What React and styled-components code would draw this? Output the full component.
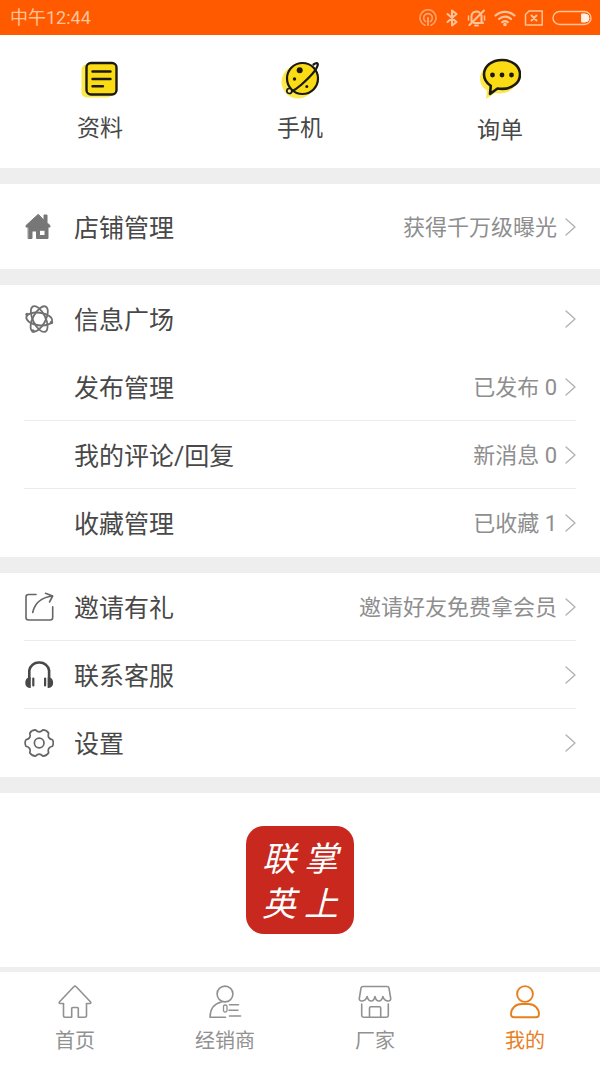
import React from 'react';
import styled, { createGlobalStyle } from 'styled-components';

const GlobalStyle = createGlobalStyle`
    * {
        box-sizing: border-box;
    }

    body {
        margin: 0;
        background: #eeeeee;
        color: #484848;
        font-family: Roboto, 'Noto Sans CJK SC', sans-serif;
    }

    a {
        color: inherit;
        text-decoration: none;
    }

    svg {
        display: block;
        flex: none;
    }
`;

const Page = styled.div`
    display: flex;
    flex-direction: column;
    min-height: 100vh;
`;

const StatusBar = styled.header`
    display: flex;
    align-items: center;
    justify-content: space-between;
    height: 35px;
    padding: 0 8px 0 10px;
    background: #ff5a00;
    color: #ffc39a;
    font-size: 18px;
    line-height: 24px;
`;

const StatusIcons = styled.div`
    display: flex;
    align-items: center;
    gap: 8px;
`;

const Main = styled.main`
    display: flex;
    flex: 1;
    flex-direction: column;
    gap: 16px;
`;

const Shortcuts = styled.nav`
    display: grid;
    grid-template-columns: repeat(3, 1fr);
    padding: 23px 0;
    background: #ffffff;
`;

const Shortcut = styled.a`
    display: flex;
    flex-direction: column;
    align-items: center;
    gap: 15px;
    font-size: 23px;
    line-height: 28px;
`;

const Card = styled.section`
    padding: 0 24px;
    background: #ffffff;
`;

const Row = styled.a`
    display: flex;
    align-items: center;
    height: ${({ $tall }) => ($tall ? 85 : 68)}px;
    border-bottom: ${({ $line }) => ($line ? '1px solid #ececec' : 'none')};
`;

const RowIcon = styled.span`
    width: 30px;
    margin-right: 20px;
    color: #666666;
`;

const RowLabel = styled.span`
    flex: 1;
    padding-top: 4px;
    font-size: 25px;
    line-height: 32px;
`;

const RowNote = styled.span`
    margin-right: 8px;
    padding-top: 2px;
    color: #8e8e8e;
    font-size: 22px;
    line-height: 28px;
`;

const LogoPanel = styled.section`
    display: flex;
    flex: 1;
    align-items: center;
    justify-content: center;
    padding: 33px 0;
    background: #ffffff;
`;

const Logo = styled.div`
    display: grid;
    grid-template-columns: 1fr 1fr;
    align-items: center;
    justify-items: center;
    width: 108px;
    height: 108px;
    padding: 10px 12px 8px;
    border-radius: 18px;
    background: #c8281e;
    color: #ffffff;
    font-size: 34px;
    font-style: italic;
    line-height: 44px;
`;

const TabBar = styled.nav`
    display: grid;
    grid-template-columns: repeat(4, 1fr);
    margin-top: 5px;
    padding: 13px 0;
    background: #ffffff;
`;

const Tab = styled.a`
    display: flex;
    flex-direction: column;
    align-items: center;
    gap: 10px;
    color: ${({ $active }) => ($active ? '#e6801f' : '#919191')};
    font-size: 20px;
    line-height: 24px;
`;

const Line = ({ width, height, stroke = 1.6, children }) => (
    <svg
        width={width}
        height={height}
        viewBox={`0 0 ${width} ${height}`}
        fill="none"
        stroke="currentColor"
        strokeWidth={stroke}
        strokeLinecap="round"
        strokeLinejoin="round"
        aria-hidden="true"
    >
        {children}
    </svg>
);

const HotspotIcon = () => (
    <Line width={18} height={18} stroke={1.6}>
        <g opacity="0.7">
            <path d="M6 16.2a8 8 0 1 1 6 0" />
            <path d="M6.6 12.5a4.3 4.3 0 1 1 4.8 0" />
            <path d="M9 9v7" strokeWidth="2" />
        </g>
    </Line>
);

const BluetoothIcon = () => (
    <Line width={14} height={18} stroke={2}>
        <path d="M2.5 5l9 8L7 16.500V1.500L11.500 5l-9 8" />
    </Line>
);

const MutedBellIcon = () => (
    <Line width={19} height={18} stroke={2}>
        <path d="M4.500 12.500V7a5 5 0 0 1 8-3.500M14.500 6.500v6l1.500 1.500H7M8 16.500h3M17 1.500L2.500 16" />
        <path d="M1.500 7v4M17.500 7v4" strokeWidth="1.500" />
    </Line>
);

const WifiIcon = () => (
    <Line width={22} height={18} stroke={2.2}>
        <path d="M1.500 6.500a14 14 0 0 1 19 0M5 10a9 9 0 0 1 12 0M8.300 13.200a4.500 4.500 0 0 1 5.400 0" />
        <circle cx="11" cy="15.500" r="0.700" fill="currentColor" />
    </Line>
);

const SimIcon = () => (
    <Line width={20} height={18} stroke={1.5}>
        <path d="M5 2h13.200v14H1.500V5.500z" />
        <path d="M7.500 6.500l5 5M12.500 6.500l-5 5" strokeWidth="2" />
    </Line>
);

const BatteryIcon = () => (
    <Line width={40} height={16} stroke={1.4}>
        <rect x="1" y="1.500" width="38" height="13" rx="6.500" />
        <path d="M30 4h3a4 4 0 0 1 0 8h-3z" fill="#fff0e4" stroke="#fff0e4" strokeWidth="1" />
    </Line>
);

const ProfileIcon = () => (
    <Line width={40} height={42} stroke={2.4}>
        <rect x="1.500" y="6.500" width="31" height="33" rx="5" fill="#fbe94e" stroke="none" />
        <rect x="6.500" y="5" width="30" height="31.500" rx="4.500" fill="#fadb14" stroke="#1c1a10" />
        <path d="M12.500 13.500h18M12.500 21h18M12.500 28.300h10.500" stroke="#1c1a10" />
    </Line>
);

const PlanetIcon = () => (
    <Line width={40} height={42} stroke={2.2}>
        <circle cx="18" cy="24" r="16.500" fill="#fbe94e" stroke="none" />
        <circle cx="22.500" cy="20.500" r="15.500" fill="#fadb14" stroke="#1c1a10" />
        <path
            d="M33.500 6.500c2.500-1.800 4.600-1.800 4.300.3C37 11 29 20 21 27c-3.200 2.800-6.500 5-9.500 6.500"
            stroke="#1c1a10"
        />
        <circle cx="9.300" cy="33" r="2.500" fill="#fff2a0" stroke="#1c1a10" strokeWidth="1.700" />
        <circle cx="19.700" cy="12.200" r="3" fill="#1c1a10" stroke="none" />
        <circle cx="14.500" cy="21" r="1.700" fill="#1c1a10" stroke="none" />
        <circle cx="26.800" cy="28.500" r="1.500" fill="#1c1a10" stroke="none" />
    </Line>
);

const InquiryIcon = () => (
    <Line width={42} height={44} stroke={2.6}>
        <path
            d="M19 6C9 6 1 12 1 21c0 5 3 9 7 11.500L7 41l9-6c12 2 21-4 21-13S29 6 19 6z"
            fill="#fbe94e"
            stroke="none"
        />
        <path
            d="M23 2C13 2 5 8 5 16.500c0 4.800 2.500 8.500 6.800 11.300L11 36l7.500-5.500c1.500.3 3 .4 4.500.4 10 0 18-6 18-14.400S33 2 23 2z"
            fill="#fadb14"
            stroke="#1c1a10"
        />
        <g fill="#1c1a10" stroke="none">
            <circle cx="13.500" cy="17" r="2.400" />
            <circle cx="23" cy="17" r="2.400" />
            <circle cx="32.500" cy="17" r="2.400" />
        </g>
    </Line>
);

const StoreIcon = () => (
    <Line width={30} height={30} stroke={1}>
        <g fill="#777777" stroke="#777777">
            <path d="M14 2.500L2 13.500v1.500h24v-1.500l-3-2.800V3h-3v5z" />
            <path
                d="M4.500 15h19.500v11.500H12.500V19H8v7.500H4.500zM15.500 18.500v5h5.500v-5z"
                fillRule="evenodd"
            />
        </g>
    </Line>
);

const AtomIcon = () => (
    <Line width={30} height={30} stroke={1.8}>
        <g stroke="#707070">
            <ellipse cx="15.200" cy="15" rx="13" ry="6.300" transform="rotate(8 15.200 15)" />
            <ellipse cx="15.200" cy="15" rx="14" ry="6.300" transform="rotate(64 15.200 15)" />
            <ellipse cx="15.200" cy="15" rx="14" ry="6.300" transform="rotate(118 15.200 15)" />
        </g>
        <g fill="#707070" stroke="none">
            <circle cx="3" cy="10.500" r="1.700" />
            <circle cx="27.500" cy="18.500" r="1.700" />
            <circle cx="9" cy="27" r="1.700" />
        </g>
    </Line>
);

const ShareIcon = () => (
    <Line width={30} height={30}>
        <path d="M12 2.500H4.500a2.500 2.500 0 0 0-2.500 2.500v20.500A2.500 2.500 0 0 0 4.500 28h21.700a2.500 2.500 0 0 0 2.500-2.500V14.700" />
        <path d="M8.700 20.500C10.500 12 17 5.500 28.300 4M21.500 1.300L28.700 4l-3.200 6" />
    </Line>
);

const HeadphonesIcon = () => (
    <Line width={30} height={30} stroke={2.6}>
        <g stroke="#484848">
            <path d="M5.300 18v-7.500A9.500 9 0 0 1 15.200 2.500a9.500 9 0 0 1 9.900 8V18" />
            <path d="M9.300 18.500v7M21.100 18.500v7" strokeWidth="2.200" />
            <path d="M6 18c-5 .5-5.500 8.500 0 9.300zM24.400 18c5 .5 5.500 8.500 0 9.300z" fill="#484848" strokeWidth="1.600" />
        </g>
    </Line>
);

const polar = (deg, r) => {
    const a = (deg * Math.PI) / 180;
    return `${(15.2 + r * Math.cos(a)).toFixed(2)} ${(15 + r * Math.sin(a)).toFixed(2)}`;
};

// six rounded teeth, one every 60 degrees
const gearPath = [0, 60, 120, 180, 240, 300]
    .map((deg, i) => `${i ? '' : `M${polar(-14, 13.6)}`}Q${polar(deg, 15)} ${polar(deg + 14, 13.6)}Q${polar(deg + 30, 9)} ${polar(deg + 46, 13.6)}`)
    .join('');

const GearIcon = () => (
    <Line width={30} height={30} stroke={1.7}>
        <path d={`${gearPath}Z`} />
        <circle cx="15.200" cy="15" r="4.800" />
    </Line>
);

const Chevron = () => (
    <Line width={11} height={18} stroke={1.3}>
        <path d="M1 1l9 8-9 8" stroke="#b0b0b0" />
    </Line>
);

const HomeIcon = () => (
    <Line width={34} height={34}>
        <path d="M15.800 1.700L1.600 16.800c-.8 1-.4 1.700.6 1.700h3.300v12.300a1.500 1.500 0 0 0 1.500 1.500h6.700V23.500a1 1 0 0 1 1-1h4.600a1 1 0 0 1 1 1v8.800H27a1.500 1.500 0 0 0 1.500-1.500V18.500h3.300c1 0 1.400-.7.600-1.700L18.200 1.700a1.600 1.600 0 0 0-2.400 0z" />
    </Line>
);

const DealerIcon = () => (
    <Line width={34} height={34}>
        <circle cx="17" cy="9" r="7.900" />
        <path d="M13.500 17C6.500 18.500 2.200 24 2 32.300h15.500" />
        <path d="M21.500 19.700h9M21 25.300h9M21.500 31h11" />
        <rect x="15.500" y="20" width="3.500" height="7" rx="1.500" strokeWidth="1.300" />
    </Line>
);

const FactoryIcon = () => (
    <Line width={34} height={34}>
        <path d="M5 1.500h24a2 2 0 0 1 2 1.700l1.700 10.300c.2 1.500-.8 2.500-2.300 2.500-2.800 0-4.700-1.800-5.500-4.500-.7 2.700-2 4.500-4 4.500s-3.300-1.800-3.900-4.500c-.6 2.700-1.900 4.500-3.900 4.500s-3.300-1.800-4-4.500C8.300 14.200 6.400 16 3.600 16c-1.500 0-2.500-1-2.300-2.500L3 3.200A2 2 0 0 1 5 1.500z" />
        <path d="M3.700 19v11.300a2 2 0 0 0 2 2h22.600a2 2 0 0 0 2-2V19M11.500 32V23a1.300 1.300 0 0 1 1.300-1.300h8.600a1.300 1.300 0 0 1 1.300 1.300v9" />
    </Line>
);

const MeIcon = () => (
    <Line width={34} height={34} stroke={1.9}>
        <circle cx="17" cy="9" r="7.900" />
        <path d="M13.500 19h7c6 0 10.500 4.500 10.500 10.300 0 2-1 3-3 3H6c-2 0-3-1-3-3C3 23.500 7.500 19 13.500 19z" />
    </Line>
);

const shortcuts = [
    { label: '资料', Icon: ProfileIcon },
    { label: '手机', Icon: PlanetIcon },
    { label: '询单', Icon: InquiryIcon },
];

const groups = [
    [
        { label: '店铺管理', note: '获得千万级曝光', Icon: StoreIcon, tall: true },
    ],
    [
        { label: '信息广场', Icon: AtomIcon },
        { label: '发布管理', note: '已发布 0', line: true },
        { label: '我的评论/回复', note: '新消息 0', line: true },
        { label: '收藏管理', note: '已收藏 1' },
    ],
    [
        { label: '邀请有礼', note: '邀请好友免费拿会员', Icon: ShareIcon, line: true },
        { label: '联系客服', Icon: HeadphonesIcon, line: true },
        { label: '设置', Icon: GearIcon },
    ],
];

const tabs = [
    { label: '首页', Icon: HomeIcon },
    { label: '经销商', Icon: DealerIcon },
    { label: '厂家', Icon: FactoryIcon },
    { label: '我的', Icon: MeIcon, active: true },
];

export default function App() {
    return (
        <Page>
            <GlobalStyle />
            <StatusBar>
                <span>中午12:44</span>
                <StatusIcons>
                    <HotspotIcon />
                    <BluetoothIcon />
                    <MutedBellIcon />
                    <WifiIcon />
                    <SimIcon />
                    <BatteryIcon />
                </StatusIcons>
            </StatusBar>
            <Main>
                <Shortcuts>
                    {shortcuts.map(({ label, Icon }) => (
                        <Shortcut key={label} href="#">
                            <Icon />
                            {label}
                        </Shortcut>
                    ))}
                </Shortcuts>
                {groups.map(rows => (
                    <Card key={rows[0].label}>
                        {rows.map(({
                            label, note, Icon, tall, line,
                        }) => (
                            <Row key={label} href="#" $tall={tall} $line={line}>
                                <RowIcon>{Icon && <Icon />}</RowIcon>
                                <RowLabel>{label}</RowLabel>
                                {note && <RowNote>{note}</RowNote>}
                                <Chevron />
                            </Row>
                        ))}
                    </Card>
                ))}
                <LogoPanel>
                    <Logo>
                        <span>联</span>
                        <span>掌</span>
                        <span>英</span>
                        <span>上</span>
                    </Logo>
                </LogoPanel>
            </Main>
            <TabBar>
                {tabs.map(({ label, Icon, active }) => (
                    <Tab key={label} href="#" $active={active} aria-current={active ? 'page' : undefined}>
                        <Icon />
                        {label}
                    </Tab>
                ))}
            </TabBar>
        </Page>
    );
}
